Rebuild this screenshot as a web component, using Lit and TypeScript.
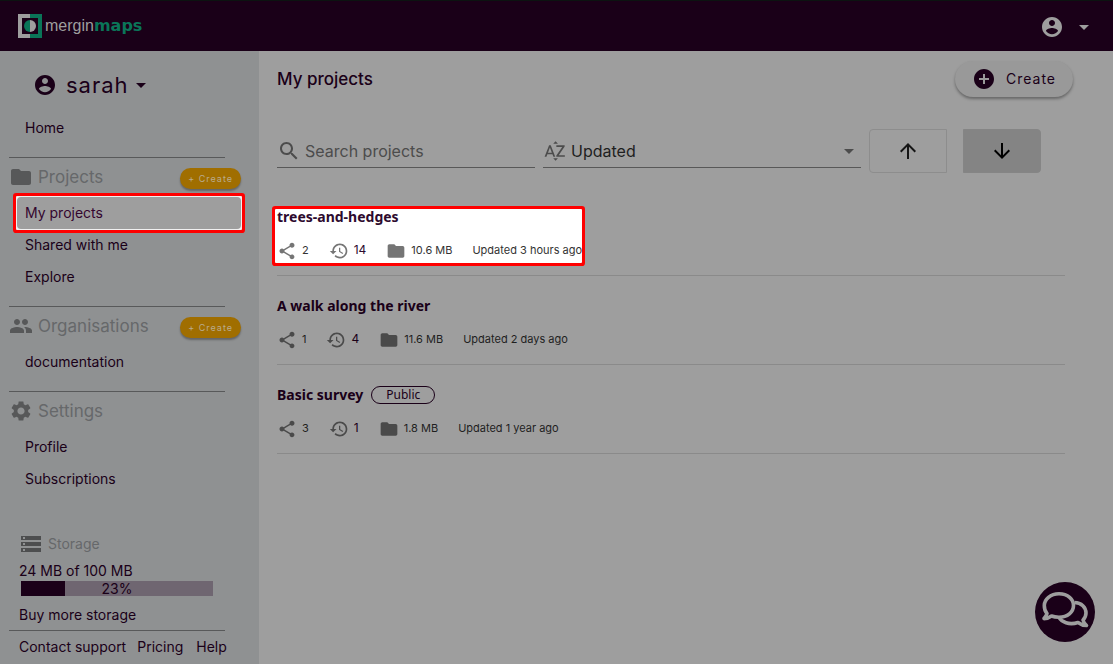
import { LitElement, html, css, svg, nothing } from "lit";
import { customElement, state } from "lit/decorators.js";
import { classMap } from "lit/directives/class-map.js";
import { styleMap } from "lit/directives/style-map.js";

const paths: Record<string, string> = {
  account:
    "M12 2C6.48 2 2 6.48 2 12s4.48 10 10 10 10-4.48 10-10S17.52 2 12 2zm0 3c1.66 0 3 1.34 3 3s-1.34 3-3 3-3-1.34-3-3 1.34-3 3-3zm0 14.2c-2.5 0-4.71-1.28-6-3.22.03-1.99 4-3.08 6-3.08 1.99 0 5.97 1.09 6 3.08-1.29 1.94-3.5 3.22-6 3.22z",
  caret: "M7 10l5 5 5-5z",
  folder:
    "M10 4H4c-1.1 0-1.99.9-1.99 2L2 18c0 1.1.9 2 2 2h16c1.1 0 2-.9 2-2V8c0-1.1-.9-2-2-2h-8l-2-2z",
  people:
    "M16 11c1.66 0 2.99-1.34 2.99-3S17.66 5 16 5c-1.66 0-3 1.34-3 3s1.34 3 3 3zm-8 0c1.66 0 2.99-1.34 2.99-3S9.66 5 8 5C6.34 5 5 6.34 5 8s1.34 3 3 3zm0 2c-2.33 0-7 1.17-7 3.5V19h14v-2.5c0-2.33-4.67-3.5-7-3.5zm8 0c-.29 0-.62.02-.97.05 1.16.84 1.97 1.97 1.97 3.45V19h6v-2.5c0-2.33-4.67-3.5-7-3.5z",
  settings:
    "M19.14 12.94c.04-.3.06-.61.06-.94 0-.32-.02-.64-.07-.94l2.03-1.58c.18-.14.23-.41.12-.61l-1.92-3.32c-.12-.22-.37-.29-.59-.22l-2.39.96c-.5-.38-1.03-.7-1.62-.94l-.36-2.54c-.04-.24-.24-.41-.48-.41h-3.84c-.24 0-.43.17-.47.41l-.36 2.54c-.59.24-1.13.57-1.62.94l-2.39-.96c-.22-.08-.47 0-.59.22L2.74 8.87c-.12.21-.08.47.12.61l2.03 1.58c-.05.3-.09.63-.09.94s.02.64.07.94l-2.03 1.58c-.18.14-.23.41-.12.61l1.92 3.32c.12.22.37.29.59.22l2.39-.96c.5.38 1.03.7 1.62.94l.36 2.54c.05.24.24.41.48.41h3.84c.24 0 .44-.17.47-.41l.36-2.54c.59-.24 1.13-.56 1.62-.94l2.39.96c.22.08.47 0 .59-.22l1.92-3.32c.12-.22.07-.47-.12-.61l-2.01-1.58zM12 15.6c-1.98 0-3.6-1.62-3.6-3.6s1.62-3.6 3.6-3.6 3.6 1.62 3.6 3.6-1.62 3.6-3.6 3.6z",
  storage:
    "M2 20h20v-4H2v4zm2-3h2v2H4v-2zM2 4v4h20V4H2zm4 3H4V5h2v2zm-4 7h20v-4H2v4zm2-3h2v2H4v-2z",
  search:
    "M15.5 14h-.79l-.28-.27C15.41 12.59 16 11.11 16 9.5 16 5.91 13.09 3 9.5 3S3 5.91 3 9.5 5.91 16 9.5 16c1.61 0 3.09-.59 4.23-1.57l.27.28v.79l5 4.99L20.49 19l-4.99-5zm-6 0C7.01 14 5 11.99 5 9.5S7.01 5 9.5 5 14 7.01 14 9.5 11.99 14 9.5 14z",
  alpha:
    "M14.94 4.66h-4.72l2.36-2.36zm-4.69 14.71h4.66l-2.33 2.33zM6.1 6.27L1.6 17.73h1.84l.92-2.45h5.11l.92 2.45h1.84L7.74 6.27H6.1zm-1.13 7.37l1.94-5.18 1.94 5.18H4.97zm10.76 2.5h6.12v1.59h-8.53v-1.29l5.92-8.56h-5.88v-1.6h8.3v1.26l-5.93 8.6z",
  plus: "M12 2C6.48 2 2 6.48 2 12s4.48 10 10 10 10-4.48 10-10S17.52 2 12 2zm5 11h-4v4h-2v-4H7v-2h4V7h2v4h4v2z",
  up: "M4 12l1.41 1.41L11 7.83V20h2V7.83l5.58 5.59L20 12l-8-8-8 8z",
  down: "M20 12l-1.41-1.41L13 16.17V4h-2v12.17l-5.58-5.59L4 12l8 8 8-8z",
  share:
    "M18 16.08c-.76 0-1.44.3-1.96.77L8.91 12.7c.05-.23.09-.46.09-.7s-.04-.47-.09-.7l7.05-4.11c.54.5 1.25.81 2.04.81 1.66 0 3-1.34 3-3s-1.34-3-3-3-3 1.34-3 3c0 .24.04.47.09.7L8.04 9.81C7.5 9.31 6.79 9 6 9c-1.66 0-3 1.34-3 3s1.34 3 3 3c.79 0 1.5-.31 2.04-.81l7.12 4.16c-.05.21-.08.43-.08.65 0 1.61 1.31 2.92 2.92 2.92s2.92-1.31 2.92-2.92-1.31-2.92-2.92-2.92z",
  history:
    "M13 3c-4.97 0-9 4.03-9 9H1l3.89 3.89.07.14L9 12H6c0-3.87 3.13-7 7-7s7 3.13 7 7-3.13 7-7 7c-1.93 0-3.68-.79-4.94-2.06l-1.42 1.42C8.27 19.99 10.51 21 13 21c4.97 0 9-4.03 9-9s-4.03-9-9-9zm-1 5v5l4.28 2.54.72-1.21-3.5-2.08V8H12z",
};

const icon = (name: string, size = 24) => html`<svg
  width=${size}
  height=${size}
  viewBox="0 0 24 24"
  fill="currentColor"
  aria-hidden="true"
>
  ${svg`<path d=${paths[name]} />`}
</svg>`;

interface Project {
  name: string;
  shares: number;
  versions: number;
  size: string;
  updated: string;
  isPublic?: boolean;
  spotlight?: boolean;
}

const projects: Project[] = [
  { name: "trees-and-hedges", shares: 2, versions: 14, size: "10.6 MB", updated: "Updated 3 hours ago", spotlight: true },
  { name: "A walk along the river", shares: 1, versions: 4, size: "11.6 MB", updated: "Updated 2 days ago" },
  { name: "Basic survey", shares: 3, versions: 1, size: "1.8 MB", updated: "Updated 1 year ago", isPublic: true },
];

interface Section {
  title: string;
  icon: string;
  create?: boolean;
  items: string[];
}

const sections: Section[] = [
  { title: "Projects", icon: "folder", create: true, items: ["My projects", "Shared with me", "Explore"] },
  { title: "Organisations", icon: "people", create: true, items: ["documentation"] },
  { title: "Settings", icon: "settings", items: ["Profile", "Subscriptions"] },
];

@customElement("app-header")
class AppHeader extends LitElement {
  static styles = css`
    :host {
      display: flex;
      align-items: center;
      justify-content: space-between;
      height: 50px;
      padding: 0 17px 0 18px;
      border-top: 1px solid #0c1311;
      background: #1a0018;
      color: #9e9e9e;
    }
    svg {
      display: block;
    }
    .logo {
      display: flex;
      align-items: center;
      gap: 3px;
      color: #9e9e9e;
      text-decoration: none;
      font-size: 16px;
      line-height: 24px;
    }
    .word {
      font-family: "Liberation Sans", Arial, sans-serif;
    }
    .word b {
      font-family: "DejaVu Sans", sans-serif;
      color: #0a7558;
    }
    .menu {
      display: flex;
      align-items: center;
      gap: 8px;
      padding: 1px 0 0;
      border: 0;
      background: none;
      color: inherit;
    }
  `;

  render() {
    return html`
      <a class="logo" href="#">
        <svg width="24" height="24" viewBox="0 0 24 24" aria-hidden="true">
          <path fill="#9e9e9e" d="M0 0h12v4H4v16h8v4H0z" />
          <path fill="#0a7558" d="M12 0h12v24H12v-4h8V4h-8z" />
          <path fill="#0a7558" d="M12 6a6 6 0 0 0 0 12z" />
          <path fill="#9e9e9e" d="M12 6a6 6 0 0 1 0 12z" />
        </svg>
        <span class="word">mergin<b>maps</b></span>
      </a>
      <button class="menu" aria-label="Account menu">${icon("account")}${icon("caret")}</button>
    `;
  }
}

@customElement("app-sidebar")
class AppSidebar extends LitElement {
  @state() private active = "My projects";
  private used = 23;

  static styles = css`
    :host {
      display: flex;
      flex-direction: column;
      box-sizing: border-box;
      background: #8f9192;
      color: #1a0018;
      font: 14px/20px Inter, sans-serif;
      padding-bottom: 7px;
    }
    svg {
      display: block;
      flex: none;
    }
    button {
      font-family: inherit;
      border: 0;
    }
    a {
      color: inherit;
      text-decoration: none;
    }
    .user {
      display: flex;
      align-items: center;
      align-self: flex-start;
      margin: 16px 0 10px 33px;
      padding: 0;
      height: 35px;
      background: none;
      color: inherit;
      font-size: 22px;
      letter-spacing: 1px;
    }
    .user span {
      margin-left: 9px;
    }
    .slot {
      margin: -1px 17px -1px 16px;
      padding: 1px;
    }
    .slot.active {
      border-radius: 1px;
      background: #f0f0f0;
      box-shadow: 0 0 0 3px #ff0000;
    }
    .item {
      display: block;
      padding: 6px 8px;
      border-radius: 4px;
    }
    .active .item {
      background: #9e9e9e;
      color: #34062f;
    }
    .rule {
      height: 1px;
      margin: 13px 34px 0 9px;
      border: 0;
      background: #58595a;
    }
    .rule.low {
      margin-top: 5px;
    }
    .heading {
      display: flex;
      align-items: center;
      height: 37px;
      margin: 0 18px 2px 9px;
      color: #66686a;
    }
    .heading svg {
      color: #575859;
    }
    h2 {
      flex: 1;
      margin: 0 0 0 5px;
      font-size: 17px;
      font-weight: 400;
    }
    .create {
      height: 21px;
      margin-top: 4px;
      padding: 0 8px;
      border-radius: 11px;
      background: #a06e00;
      color: #b9ab8e;
      font-size: 9px;
      letter-spacing: 1px;
      box-shadow: 0 2px 2px rgba(0, 0, 0, 0.3);
    }
    .storage {
      display: flex;
      flex-direction: column;
      margin: auto 46px 0 19px;
    }
    .label {
      display: flex;
      align-items: center;
      gap: 5px;
      margin-bottom: 5px;
      color: #66686a;
    }
    .label svg {
      color: #4d4e4f;
    }
    .bar {
      position: relative;
      height: 15px;
      margin: 0 0 9px 2px;
      background: #6f6671;
      line-height: 15px;
      text-align: center;
    }
    .fill {
      height: 15px;
      background: #1a0018;
    }
    .percent {
      position: absolute;
      inset: 0;
    }
    .links {
      display: flex;
      gap: 11px;
      margin: 6px 0 0 19px;
    }
    .links a:last-child {
      margin-left: 2px;
    }
  `;

  private item(name: string) {
    return html`<div class=${classMap({ slot: true, active: name === this.active })}>
      <a class="item" href="#" @click=${() => (this.active = name)}>${name}</a>
    </div>`;
  }

  render() {
    return html`
      <button class="user">${icon("account")}<span>sarah</span>${icon("caret")}</button>
      ${this.item("Home")}
      ${sections.map(
        (s) => html`
          <hr class="rule" />
          <div class="heading">
            ${icon(s.icon)}
            <h2>${s.title}</h2>
            ${s.create ? html`<button class="create">+ Create</button>` : nothing}
          </div>
          ${s.items.map((name) => this.item(name))}
        `,
      )}
      <div class="storage">
        <div class="label">${icon("storage")}<span>Storage</span></div>
        <span>24 MB of 100 MB</span>
        <div class="bar" role="progressbar" aria-valuenow=${this.used} aria-valuemin="0" aria-valuemax="100" aria-label="Storage used">
          <div class="fill" style=${styleMap({ width: `${this.used}%` })}></div>
          <div class="percent">${this.used}%</div>
        </div>
        <a href="#">Buy more storage</a>
      </div>
      <hr class="rule low" />
      <div class="links">
        <a href="#">Contact support</a>
        <a href="#">Pricing</a>
        <a href="#">Help</a>
      </div>
    `;
  }
}

@customElement("project-row")
class ProjectRow extends LitElement {
  static properties = { project: { attribute: false } };
  declare project: Project;

  static styles = css`
    :host {
      display: block;
      padding: 22px 0 12px;
      border-bottom: 1px solid #8a8a8a;
      color: #1f1f1f;
      font: 11px/16px Inter, sans-serif;
    }
    svg {
      display: block;
      color: #4a4a4a;
    }
    a {
      color: #1a0018;
      text-decoration: none;
    }
    .content {
      width: fit-content;
      margin: 0 -2px;
      padding: 0 0 0 2px;
    }
    .spotlight {
      border-radius: 1px;
      background: #ffffff;
      box-shadow: 0 0 0 3px #ff0000;
      color: #333333;
    }
    .spotlight svg {
      color: #757575;
    }
    .spotlight a {
      color: #2d0a2e;
    }
    .title {
      display: flex;
      align-items: center;
      gap: 8px;
      height: 16px;
      margin-bottom: 12px;
      font-family: "Noto Sans", sans-serif;
      font-size: 14px;
    }
    .title a {
      font-weight: 700;
    }
    .badge {
      padding: 0 14px;
      border: 1px solid #1a0018;
      border-radius: 10px;
      color: #1a0018;
      font-size: 12px;
      line-height: 16px;
    }
    .meta {
      display: flex;
      align-items: center;
      gap: 20px;
      height: 26px;
    }
    .stat {
      display: flex;
      align-items: center;
      gap: 5px;
    }
    .stat svg {
      margin-top: 1px;
    }
    .stat a {
      font-size: 12px;
    }
  `;

  render() {
    const p = this.project;
    return html`
      <div class=${classMap({ content: true, spotlight: !!p.spotlight })}>
        <div class="title">
          <a href="#">${p.name}</a>
          ${p.isPublic ? html`<span class="badge">Public</span>` : nothing}
        </div>
        <div class="meta">
          <span class="stat">${icon("share", 20)}<span>${p.shares}</span></span>
          <span class="stat">${icon("history", 20)}<a href="#">${p.versions}</a></span>
          <span class="stat">${icon("folder", 20)}<span>${p.size}</span></span>
          <span>${p.updated}</span>
        </div>
      </div>
    `;
  }
}

@customElement("app-root")
class AppRoot extends LitElement {
  @state() private descending = true;

  static styles = css`
    :host {
      display: grid;
      grid-template: auto 1fr / 259px 1fr;
      min-height: 100vh;
      background: #9e9e9e;
      color: #1a0018;
      font: 16px/24px Inter, sans-serif;
    }
    svg {
      display: block;
      flex: none;
    }
    app-header {
      grid-column: 1 / -1;
    }
    main {
      padding: 10px 48px 0 18px;
    }
    .top {
      display: flex;
      align-items: center;
      justify-content: space-between;
      margin-right: -8px;
    }
    h1 {
      margin: 0;
      font-size: 17px;
      font-weight: 500;
    }
    .create {
      display: flex;
      align-items: center;
      gap: 10px;
      height: 36px;
      padding: 0 17px;
      border: 0;
      border-radius: 18px;
      background: #999999;
      color: #1a0018;
      font: 14px/20px Inter, sans-serif;
      letter-spacing: 1px;
      box-shadow: 0 2px 3px rgba(0, 0, 0, 0.35);
    }
    .filters {
      display: grid;
      grid-template-columns: minmax(0, 258fr) minmax(0, 318fr) minmax(0, 78fr) minmax(0, 78fr);
      gap: 8px;
      align-items: start;
      margin: 32px 32px 14px 0;
    }
    .field {
      display: flex;
      align-items: center;
      height: 33px;
      padding-top: 5px;
      border-bottom: 1px solid #585858;
      color: #4c4c4c;
    }
    input,
    select {
      flex: 1;
      min-width: 0;
      height: 32px;
      padding: 0 0 0 4px;
      border: 0;
      outline: 0;
      background: none;
      appearance: none;
      color: #1f1f1f;
      font: 16px/24px Inter, sans-serif;
    }
    input::placeholder {
      color: #4c4c4c;
      opacity: 1;
    }
    .order {
      display: flex;
      align-items: center;
      justify-content: center;
      height: 44px;
      padding: 0;
      border: 1px solid #8d8d8d;
      background: none;
      color: #151515;
    }
    .order.first {
      border-radius: 4px 0 0 4px;
    }
    .order.last {
      margin: 0 -8px 0 8px;
      border-radius: 0 4px 4px 0;
    }
    .order.on {
      border-color: #858585;
      background: #848484;
      color: #000000;
    }
    .chat {
      position: fixed;
      right: 18px;
      bottom: 22px;
      width: 60px;
      height: 60px;
      padding: 0;
      border: 0;
      border-radius: 50%;
      background: #1a0018;
    }
  `;

  render() {
    return html`
      <app-header></app-header>
      <app-sidebar></app-sidebar>
      <main>
        <div class="top">
          <h1>My projects</h1>
          <button class="create">${icon("plus")}<span>Create</span></button>
        </div>
        <div class="filters">
          <label class="field">
            ${icon("search")}
            <input type="text" placeholder="Search projects" aria-label="Search projects" />
          </label>
          <label class="field">
            ${icon("alpha")}
            <select aria-label="Sort by">
              <option>Updated</option>
              <option>Name</option>
              <option>Created</option>
            </select>
            ${icon("caret")}
          </label>
          <button
            class=${classMap({ order: true, first: true, on: !this.descending })}
            aria-label="Ascending"
            @click=${() => (this.descending = false)}
          >
            ${icon("up")}
          </button>
          <button
            class=${classMap({ order: true, last: true, on: this.descending })}
            aria-label="Descending"
            @click=${() => (this.descending = true)}
          >
            ${icon("down")}
          </button>
        </div>
        ${projects.map((p) => html`<project-row .project=${p}></project-row>`)}
      </main>
      <button class="chat" aria-label="Open chat">
        <svg width="60" height="60" viewBox="0 0 60 60" fill="none" stroke="#9e9e9e" stroke-width="3.6" stroke-linejoin="round" aria-hidden="true">
          <path d="M39.5 20.5C46.500 20.500 51 25.500 51 31C51 34.500 49.500 36.500 48 38C48.500 40.500 50 42 51.500 43.500C47.500 43.500 45 42 43 40.500C34 43.500 26.500 40 24 35.500" />
          <path fill="#1a0018" d="M24 11.800C33 11.800 38.500 17.500 38.500 23.500C38.500 30 32.500 35.200 24 35.200C21 35.200 18.500 34.800 16.500 34C14.500 35.500 12 36.600 9 36.600C10.500 35 11.500 33 12 31.500C10 29.500 9.300 26.500 9.300 23.500C9.300 17.500 15.500 11.800 24 11.800Z" />
        </svg>
      </button>
    `;
  }
}
